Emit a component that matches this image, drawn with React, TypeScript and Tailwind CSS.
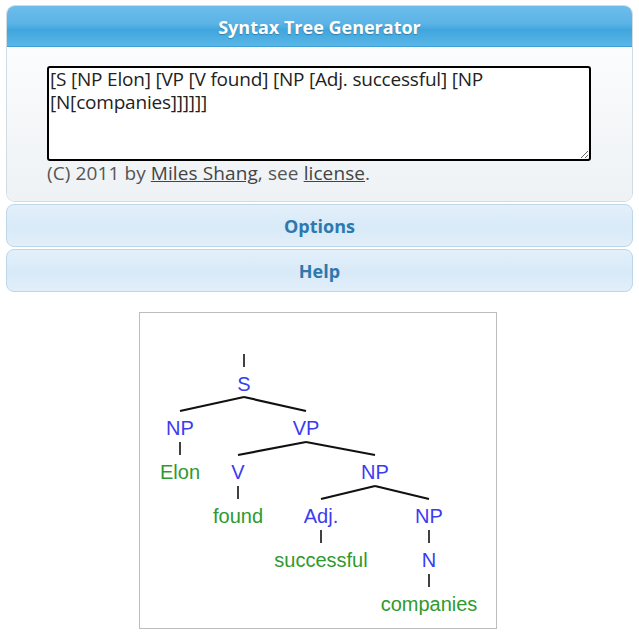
import React from 'react';

const TEXT = '[S [NP Elon] [VP [V found] [NP [Adj. successful] [NP [N[companies]]]]]]';

type Label = { x: number; y: number; t: string; leaf?: boolean };

const labels: Label[] = [
  { x: 104, y: 78, t: 'S' },
  { x: 40, y: 122, t: 'NP' },
  { x: 166, y: 122, t: 'VP' },
  { x: 40, y: 166, t: 'Elon', leaf: true },
  { x: 98, y: 166, t: 'V' },
  { x: 235, y: 166, t: 'NP' },
  { x: 98, y: 210, t: 'found', leaf: true },
  { x: 181, y: 210, t: 'Adj.' },
  { x: 289, y: 210, t: 'NP' },
  { x: 181, y: 254, t: 'successful', leaf: true },
  { x: 289, y: 254, t: 'N' },
  { x: 289, y: 298, t: 'companies', leaf: true },
];

// vertical stems
const stems = [
  [104, 41, 54],
  [40, 129, 142],
  [98, 173, 186],
  [181, 217, 230],
  [289, 217, 230],
  [289, 261, 274],
];

// branches: apex -> children
const branches = [
  [104, 84, 40, 98],
  [104, 84, 166, 98],
  [166, 129, 98, 142],
  [166, 129, 235, 142],
  [235, 173, 181, 186],
  [235, 173, 289, 186],
];

function Tree() {
  return (
    <svg width="355" height="314" viewBox="0 0 355 314">
      {stems.map(([x, y1, y2], i) => (
        <line key={'s' + i} x1={x} y1={y1} x2={x} y2={y2} stroke="#111" strokeWidth="1.6" />
      ))}
      {branches.map(([x1, y1, x2, y2], i) => (
        <line key={'b' + i} x1={x1} y1={y1} x2={x2} y2={y2} stroke="#111" strokeWidth="2.2" />
      ))}
      {labels.map((l, i) => (
        <text
          key={i}
          x={l.x}
          y={l.y}
          textAnchor="middle"
          fontFamily="'Liberation Sans', Arial, sans-serif"
          fontSize="20"
          fill={l.leaf ? '#2e9a2e' : '#3b3bf0'}
        >
          {l.t}
        </text>
      ))}
    </svg>
  );
}

export default function App() {
  return (
    <div className="min-h-screen bg-white px-[6px] pt-[5px] font-['Open_Sans','Noto_Sans',sans-serif]">
      <div className="rounded-[9px] border border-[#d3dbe2] overflow-hidden">
        <div className="h-[41px] flex items-center justify-center border-b border-[#3a9fd6] bg-[linear-gradient(to_bottom,#6cbdeb_0%,#5bb3e6_45%,#3ea6dd_60%,#5bb6e8_100%)]">
          <h1 className="mt-[2px] text-white font-bold text-[18px] [text-shadow:0_1px_1px_rgba(0,0,0,0.25)]">
            Syntax Tree Generator
          </h1>
        </div>
        <div className="bg-[linear-gradient(to_bottom,#fbfcfd,#eef2f5)] pl-[40px] pr-[41px] pt-[19px] pb-[16px]">
          <textarea
            defaultValue={TEXT}
            spellCheck={false}
            className="block w-full h-[95px] border-2 border-black rounded-[3px] bg-white px-[1px] py-0 text-[19px] leading-[23px] tracking-[-0.2px] text-[#222] font-['Open_Sans',sans-serif] resize-y outline-none"
          />
          <p className="mt-0 text-[19px] leading-[24px] tracking-[0.1px] text-[#555]">
            (C) 2011 by <a className="underline text-[#444]" href="#">Miles Shang</a>, see{' '}
            <a className="underline text-[#444]" href="#">license</a>.
          </p>
        </div>
      </div>

      <div className="mt-[2px] h-[43px] rounded-[8px] border border-[#bcd6ea] bg-[linear-gradient(to_bottom,#e3f0fb,#d8e9f7_55%,#e2effa)] flex items-center justify-center">
        <span className="mt-[1px] text-[18px] font-bold text-[#2d78ad]">Options</span>
      </div>
      <div className="mt-[2px] h-[43px] rounded-[8px] border border-[#bcd6ea] bg-[linear-gradient(to_bottom,#e3f0fb,#d8e9f7_55%,#e2effa)] flex items-center justify-center">
        <span className="mt-[1px] text-[18px] font-bold text-[#2d78ad]">Help</span>
      </div>

      <div className="mt-[20px] ml-[133px] w-[358px] h-[317px] border border-[#bdbdbd] bg-white">
        <Tree />
      </div>
    </div>
  );
}
